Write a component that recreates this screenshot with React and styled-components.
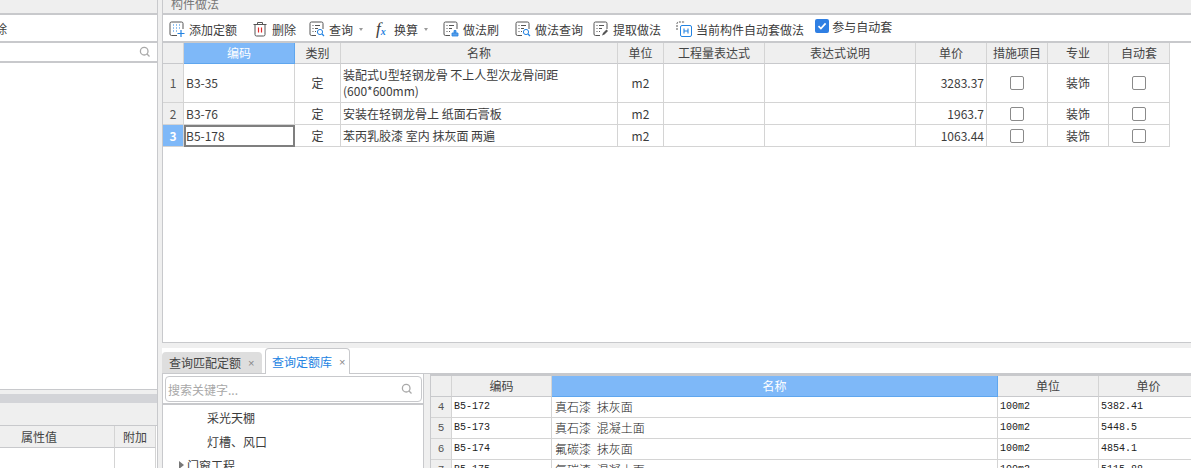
import React from 'react'
import styled, { createGlobalStyle } from 'styled-components'

const LINE = '#c8c9cc'
const CELL_LINE = '#d4d4d4'
const HEAD = '#efefef'
const BLUE = '#7eb8f8'

const GlobalStyle = createGlobalStyle`
  html, body { margin: 0; padding: 0; background: #efefef; }
  body {
    font-family: "Noto Sans CJK SC", "Noto Sans", sans-serif;
    font-size: 12px;
    color: #3c3c3c;
  }
`

const Page = styled.div`
  display: flex;
  width: 1191px;
  height: 468px;
  overflow: hidden;
  background: #efefef;
`

const LeftColumn = styled.div`
  width: 158px;
  display: flex;
  flex-direction: column;
  flex: none;
  border-right: 1px solid ${LINE};
  box-sizing: border-box;
  margin-right: 4px;
`

const RightColumn = styled.div`
  flex: 1;
  min-width: 0;
  display: flex;
  flex-direction: column;
`

const TitleBar = styled.div`
  height: 12px;
  flex: none;
  overflow: hidden;
  display: flex;
  align-items: flex-end;
  padding-left: ${p => p.$left || 0}px;
  padding-bottom: 1px;
  background: #efefef;
  border-bottom: 2px solid ${LINE};
  color: #777;
  line-height: 16px;
`

const LeftRow = styled.div`
  height: 26px;
  background: #fff;
  display: flex;
  align-items: center;
  border-bottom: 2px solid ${LINE};
  overflow: hidden;
`

const ClippedText = styled.span`
  margin-left: -5px;
`

const LeftSearch = styled.div`
  height: 18px;
  background: #fff;
  display: flex;
  align-items: center;
  justify-content: flex-end;
  padding-right: 6px;
  border-bottom: 2px solid ${LINE};
`

const LeftBlank = styled.div`
  flex: 1;
  background: #fff;
  border-bottom: 1px solid ${LINE};
`

const GreyBand = styled.div`
  margin-top: 4px;
  height: 9px;
  background: #d3d4d8;
`

const PlainBand = styled.div`
  height: 22px;
  background: #efefef;
  border-bottom: 1px solid ${LINE};
`

const PropGrid = styled.div`
  display: grid;
  grid-template-columns: 115px 41px;
  grid-template-rows: 22px 1fr;
  height: 42px;
  background: #fff;
`

const PropHead = styled.div`
  background: ${HEAD};
  border-right: 1px solid ${CELL_LINE};
  border-bottom: 1px solid ${LINE};
  display: flex;
  align-items: center;
  justify-content: center;
  padding-right: ${p => p.$shift || 0}px;
  color: #444;
`

const PropCell = styled.div`
  border-right: 1px solid ${CELL_LINE};
`

const MainPanel = styled.div`
  height: 343px;
  flex: none;
  display: flex;
  flex-direction: column;
  border-left: 1px solid ${LINE};
  border-bottom: 1px solid ${LINE};
  box-sizing: border-box;
  background: #fff;
`

const Toolbar = styled.div`
  height: 26px;
  flex: none;
  display: flex;
  align-items: center;
  gap: 15px;
  padding-left: 6px;
  background: #fff;
  border-bottom: 2px solid ${LINE};
  white-space: nowrap;
`

const ToolItem = styled.div`
  display: flex;
  align-items: center;
  gap: 4px;
  margin-left: ${p => p.$nudge || 0}px;
  color: #3c3c3c;
  position: relative;
  top: 1px;
`

const Caret = styled.span`
  width: 0;
  height: 0;
  margin-left: 2px;
  margin-right: -2px;
  border-left: 2.5px solid transparent;
  border-right: 2.5px solid transparent;
  border-top: 3px solid #9a9a9a;
`

const FxIcon = styled.span`
  width: 14px;
  height: 16px;
  font-family: "Liberation Serif", serif;
  font-style: italic;
  font-size: 17px;
  line-height: 16px;
  color: #3a3a3a;
  display: flex;
  align-items: baseline;
  sup {
    font-size: 10px;
    font-weight: 700;
    color: #1f7fe0;
    line-height: 1;
    transform: translate(0, 1px);
  }
`

const AutoCheck = styled.label`
  display: flex;
  align-items: center;
  gap: 3px;
  margin-left: -4px;
  position: relative;
  top: -2px;
`

const BlueBox = styled.span`
  width: 14px;
  height: 14px;
  border-radius: 2px;
  background: #2f7fe3;
  display: flex;
  align-items: center;
  justify-content: center;
`

const Grid = styled.div`
  display: grid;
  grid-template-columns: ${p => p.$cols};
  grid-template-rows: ${p => p.$rows};
  flex: none;
`

const Cell = styled.div`
  box-sizing: border-box;
  border-right: 1px solid ${CELL_LINE};
  border-bottom: 1px solid ${CELL_LINE};
  display: flex;
  align-items: center;
  justify-content: ${p => p.$align || 'flex-start'};
  padding: 0 ${p => (p.$align === 'center' ? 0 : 2)}px;
  background: #fff;
  line-height: 16px;
  color: #3c3c3c;
  overflow: hidden;
  white-space: ${p => (p.$wrap ? 'normal' : 'nowrap')};
`

const HeadCell = styled(Cell).attrs({ $align: 'center' })`
  background: ${p => (p.$active ? BLUE : HEAD)};
  color: ${p => (p.$active ? '#fff' : '#444')};
  border-color: ${p => (p.$active ? '#5fa6ee' : CELL_LINE)};
  border-bottom-color: ${p => (p.$active ? '#5fa6ee' : LINE)};
`

const RowNo = styled(Cell).attrs({ $align: 'center' })`
  background: ${p => (p.$active ? BLUE : HEAD)};
  color: ${p => (p.$active ? '#fff' : '#555')};
  font-weight: ${p => (p.$active ? 700 : 400)};
`

const ActiveCell = styled(Cell)`
  border: 2px solid #7f7f7f;
  padding: 0;
`

const RightCell = styled(Cell)`
  justify-content: flex-end;
  padding-right: 2px;
`

const Box = styled.span`
  width: 14px;
  height: 14px;
  box-sizing: border-box;
  border: 1px solid #8a8a8a;
  border-radius: 2px;
  background: #fff;
`

const TabStrip = styled.div`
  height: 26px;
  margin-top: 5px;
  flex: none;
  display: flex;
  align-items: flex-end;
  gap: 3px;
  background: #fff;
  box-sizing: border-box;
  border-bottom: 1px solid ${LINE};
`

const Tab = styled.div`
  height: ${p => (p.$active ? 26 : 21)}px;
  width: ${p => (p.$active ? 85 : 100)}px;
  box-sizing: border-box;
  display: flex;
  align-items: center;
  gap: 7px;
  padding-left: ${p => (p.$active ? 6 : 7)}px;
  white-space: nowrap;
  border-radius: 4px 4px 0 0;
  background: ${p => (p.$active ? '#fff' : '#dedede')};
  border: ${p => (p.$active ? `1px solid ${LINE}` : 'none')};
  border-bottom: none;
  color: ${p => (p.$active ? '#2383e2' : '#444')};
  margin-bottom: ${p => (p.$active ? -1 : 0)}px;
  position: relative;
  span { color: #888; font-size: 11px; font-family: "Liberation Sans", sans-serif; }
`

const LowerArea = styled.div`
  flex: 1;
  min-height: 0;
  display: flex;
  background: #fff;
`

const TreePanel = styled.div`
  width: 262px;
  flex: none;
  border-left: 1px solid ${LINE};
  border-right: 1px solid ${LINE};
  box-sizing: border-box;
  overflow: hidden;
`

const SearchWrap = styled.div`
  padding: 2px 1px 1px 2px;
  border-bottom: 2px solid ${LINE};
`

const SearchBox = styled.div`
  height: 26px;
  box-sizing: border-box;
  border: 1px solid ${LINE};
  border-radius: 4px;
  display: flex;
  align-items: center;
  justify-content: space-between;
  padding: 0 8px 0 2px;
  color: #a8a8a8;
`

const TreeRow = styled.div`
  height: 24px;
  display: flex;
  align-items: center;
  padding-left: ${p => p.$indent}px;
  color: #3c3c3c;
`

const TreeArrow = styled.span`
  width: 0;
  height: 0;
  margin-right: 3px;
  border-top: 4px solid transparent;
  border-bottom: 4px solid transparent;
  border-left: 5px solid #777;
`

const Divider = styled.div`
  width: 6px;
  flex: none;
  background: #efefef;
  border-right: 1px solid ${LINE};
`

const LibraryWrap = styled.div`
  flex: 1;
  min-width: 0;
  border-top: 2px solid ${LINE};
  overflow: hidden;
`

const SerifCell = styled(Cell)`
  font-family: "Liberation Mono", "Noto Sans CJK SC", monospace;
  font-size: 10px;
  color: #222;
  span { font-family: "Noto Sans CJK SC", sans-serif; font-size: 12px; font-weight: 300; word-spacing: 3px; margin-left: 1px; }
`

const SerifNo = styled(RowNo)`
  font-family: "Liberation Mono", monospace;
  font-size: 11px;
`

const DocFrame = () => (
  <>
    <path d="M7 14.5H2.5a1.5 1.5 0 0 1-1.5-1.5V2.5A1.5 1.5 0 0 1 2.5 1h10A1.5 1.5 0 0 1 14 2.5V8" fill="none" stroke="#555" />
    <path d="M3.5 4.5h1M6 4.5h5M3.5 7.5h1M6 7.5h3M3.5 10.5h1M6 10.5h1" stroke="#555" />
  </>
)

const Icon = ({ children }) => (
  <svg width="16" height="16" viewBox="0 0 16 16" style={{ flex: 'none' }}>{children}</svg>
)

const AddIcon = () => (
  <Icon>
    <path d="M8 14.5H2.5A1.5 1.5 0 0 1 1 13V2.5A1.5 1.5 0 0 1 2.5 1h10A1.5 1.5 0 0 1 14 2.5V8" fill="none" stroke="#555" />
    <path d="M4 4h1M7 4h1M10 4h1M4 7h1M7 7h1M10 7h1M4 10h1M7 10h1" stroke="#2383e2" />
    <path d="M12 9v7M8.5 12.5h7" stroke="#2383e2" strokeWidth="1.2" />
  </Icon>
)

const TrashIcon = () => (
  <Icon>
    <path d="M1.500 3.500h13M5.500 3.500V1.500h5v2M3 3.500v10A1.500 1.500 0 0 0 4.500 15h7a1.500 1.500 0 0 0 1.500-1.500v-10" fill="none" stroke="#555" />
    <path d="M6.500 6.500v5M9.500 6.500v5" stroke="#e02b2b" strokeWidth="1.200" />
  </Icon>
)

const QueryIcon = () => (
  <Icon>
    <DocFrame />
    <circle cx="11" cy="11" r="2.600" fill="#fff" stroke="#2383e2" />
    <path d="M13 13l2 2" stroke="#2383e2" strokeWidth="1.300" />
  </Icon>
)

const BrushIcon = () => (
  <Icon>
    <DocFrame />
    <path d="M9 15v-3h6v3zM11 12V9.500h2V12" fill="#5a9fe8" stroke="#2383e2" strokeWidth="0.800" />
  </Icon>
)

const PickIcon = () => (
  <Icon>
    <DocFrame />
    <path d="M9 14.500l1-2.500 3.500-3.500 1.500 1.500-3.500 3.500z" fill="#555" />
  </Icon>
)

const CurrentIcon = () => (
  <Icon>
    <path d="M1 9V2.500A1.500 1.500 0 0 1 2.500 1H9" fill="none" stroke="#555" strokeDasharray="2 1" />
    <rect x="4.500" y="4.500" width="11" height="11" rx="1.500" fill="#fff" stroke="#2383e2" />
    <path d="M8 7.500v5M12 7.500v5M8 10h4" stroke="#2383e2" strokeWidth="1.100" fill="none" />
  </Icon>
)

const SearchGlyph = () => (
  <svg width="12" height="12" viewBox="0 0 12 12">
    <circle cx="5.200" cy="5.200" r="3.800" fill="none" stroke="#a9a9a9" strokeWidth="1.300" />
    <path d="M8 8l2.500 2.500" stroke="#a9a9a9" strokeWidth="1.300" />
  </svg>
)

const TICK = (
  <svg width="10" height="10" viewBox="0 0 10 10">
    <path d="M1.500 5.200l2.400 2.400L8.600 2.400" fill="none" stroke="#fff" strokeWidth="1.700" />
  </svg>
)

const HEADERS = ['编码', '类别', '名称', '单位', '工程量表达式', '表达式说明', '单价', '措施项目', '专业', '自动套']

const ROWS = [
  { no: 1, code: 'B3-35', name: '装配式U型轻钢龙骨 不上人型次龙骨间距(600*600mm)', price: '3283.37' },
  { no: 2, code: 'B3-76', name: '安装在轻钢龙骨上 纸面石膏板', price: '1963.7' },
  { no: 3, code: 'B5-178', name: '苯丙乳胶漆 室内 抹灰面 两遍', price: '1063.44', active: true },
]

const LIBRARY = [
  { no: 4, code: 'B5-172', name: '真石漆 抹灰面', unit: '100m2', price: '5382.41' },
  { no: 5, code: 'B5-173', name: '真石漆 混凝土面', unit: '100m2', price: '5448.5' },
  { no: 6, code: 'B5-174', name: '氟碳漆 抹灰面', unit: '100m2', price: '4854.1' },
  { no: 7, code: 'B5-175', name: '氟碳漆 混凝土面', unit: '100m2', price: '5115.88' },
]

const App = () => {
  return (
    <Page>
      <GlobalStyle />
      <LeftColumn>
        <TitleBar />
        <LeftRow><ClippedText>除</ClippedText></LeftRow>
        <LeftSearch><SearchGlyph /></LeftSearch>
        <LeftBlank />
        <GreyBand />
        <PlainBand />
        <PropGrid>
          <PropHead $shift={36}>属性值</PropHead>
          <PropHead>附加</PropHead>
          <PropCell />
          <PropCell />
        </PropGrid>
      </LeftColumn>
      <RightColumn>
        <MainPanel>
          <TitleBar $left={8}>构件做法</TitleBar>
          <Toolbar>
            <ToolItem><AddIcon />添加定额</ToolItem>
            <ToolItem><TrashIcon />删除</ToolItem>
            <ToolItem $nudge={-2}><QueryIcon />查询<Caret /></ToolItem>
            <ToolItem><FxIcon>f<sup>x</sup></FxIcon>换算<Caret /></ToolItem>
            <ToolItem $nudge={2}><BrushIcon />做法刷</ToolItem>
            <ToolItem $nudge={1}><QueryIcon />做法查询</ToolItem>
            <ToolItem $nudge={-5}><PickIcon />提取做法</ToolItem>
            <ToolItem><CurrentIcon />当前构件自动套做法</ToolItem>
            <AutoCheck><BlueBox>{TICK}</BlueBox>参与自动套</AutoCheck>
          </Toolbar>
          <Grid
            $cols="21px 111px 46px 277px 46px 101px 151px 71px 61px 61px 61px"
            $rows="21px 39px 22px 22px"
          >
            <HeadCell />
            {HEADERS.map((h, i) => <HeadCell key={h} $active={i === 0}>{h}</HeadCell>)}
            {ROWS.map(r => (
              <React.Fragment key={r.no}>
                <RowNo $active={r.active}>{r.no}</RowNo>
                {r.active ? <ActiveCell>{r.code}</ActiveCell> : <Cell>{r.code}</Cell>}
                <Cell $align="center">定</Cell>
                <Cell $wrap>{r.name}</Cell>
                <Cell $align="center">m2</Cell>
                <Cell />
                <Cell />
                <RightCell>{r.price}</RightCell>
                <Cell $align="center"><Box /></Cell>
                <Cell $align="center">装饰</Cell>
                <Cell $align="center"><Box /></Cell>
              </React.Fragment>
            ))}
          </Grid>
        </MainPanel>
        <TabStrip>
          <Tab>查询匹配定额<span>×</span></Tab>
          <Tab $active>查询定额库<span>×</span></Tab>
        </TabStrip>
        <LowerArea>
          <TreePanel>
            <SearchWrap>
              <SearchBox>搜索关键字...<SearchGlyph /></SearchBox>
            </SearchWrap>
            <TreeRow $indent={44}>采光天棚</TreeRow>
            <TreeRow $indent={44}>灯槽、风口</TreeRow>
            <TreeRow $indent={16}><TreeArrow />门窗工程</TreeRow>
          </TreePanel>
          <Divider />
          <LibraryWrap>
            <Grid $cols="21px 100px 446px 101px 100px" $rows="21px 21px 21px 21px 21px">
              <HeadCell />
              <HeadCell>编码</HeadCell>
              <HeadCell $active>名称</HeadCell>
              <HeadCell>单位</HeadCell>
              <HeadCell>单价</HeadCell>
              {LIBRARY.map(r => (
                <React.Fragment key={r.no}>
                  <SerifNo>{r.no}</SerifNo>
                  <SerifCell>{r.code}</SerifCell>
                  <SerifCell><span>{r.name}</span></SerifCell>
                  <SerifCell>{r.unit}</SerifCell>
                  <SerifCell>{r.price}</SerifCell>
                </React.Fragment>
              ))}
            </Grid>
          </LibraryWrap>
        </LowerArea>
      </RightColumn>
    </Page>
  )
}

export default App
